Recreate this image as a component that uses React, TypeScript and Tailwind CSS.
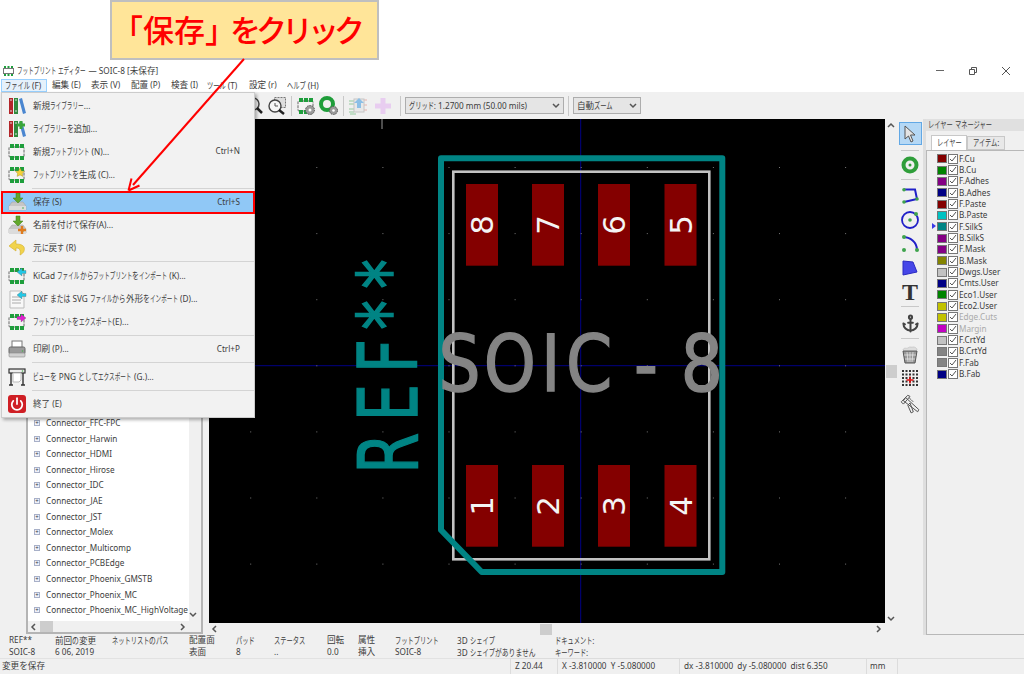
import React from 'react';
import { Anchor, Power } from 'lucide-react';

const GREEN = '#1e9e3c';

// The original UI font has condensed kana; no installed font does, so kana runs are squeezed
function Jp({ text, wide }: { text: string; wide?: boolean }) {
  const parts = text.split(/([\u30A0-\u30FF]+|[\u3040-\u309F]+|[\u4E00-\u9FFF]+)/);
  return (
    <>
      {parts.map((part, i) => {
        if (/^[\u30A0-\u30FF]+$/.test(part)) {
          return (
            <span key={i} className="inline-block whitespace-nowrap text-[9.2px]" style={{ width: part.length * (wide ? 6.2 : 5.6) }}>
              <span className={`inline-block origin-left ${wide ? 'scale-x-[0.68]' : 'scale-x-[0.61]'}`}>{part}</span>
            </span>
          );
        }
        if (/^[\u3040-\u309F]+$/.test(part)) {
          return (
            <span key={i} className="inline-block whitespace-nowrap text-[9.2px]" style={{ width: part.length * 6.8 }}>
              <span className="inline-block origin-left scale-x-[0.74]">{part}</span>
            </span>
          );
        }
        if (/^[\u4E00-\u9FFF]+$/.test(part)) {
          return <span key={i} className="whitespace-pre text-[8.6px]">{part}</span>;
        }
        return <span key={i} className="whitespace-pre">{part}</span>;
      })}
    </>
  );
}

function Fp({ children, gear }: { children?: React.ReactNode; gear?: boolean }) {
  return (
    <svg width="20" height="20" viewBox="0 0 20 20">
      <rect x="2" y="5" width="15" height="10" rx="1" fill="#f4f4f4" stroke="#666" strokeDasharray={gear ? undefined : '3 1'} />
      {[3, 8, 13].map((x) => (
        <g key={x}>
          <rect x={x} y="2" width="4" height="4" fill={GREEN} />
          <rect x={x} y="14" width="4" height="4" fill={GREEN} />
        </g>
      ))}
      {children}
    </svg>
  );
}

function Books({ plus }: { plus?: boolean }) {
  return (
    <svg width="20" height="20" viewBox="0 0 20 20">
      <rect x="2" y="2" width="4" height="16" fill="#b3262a" />
      <rect x="7" y="2" width="4" height="16" fill="#2f8a3c" />
      <path d="M12 3l3-1 4 15-3 1z" fill="#4a86d0" />
      <path d="M3 4h2M3 15h2M8 4h2M8 15h2" stroke="#ddd" />
      {plus && <path d="M14 2v8M10 6h8" stroke="#3aa53a" strokeWidth="3" />}
    </svg>
  );
}

function Drive({ extra }: { extra?: boolean }) {
  return (
    <svg width="20" height="20" viewBox="0 0 20 20">
      <path d="M5 10h11l3 4v4H2v-4z" fill="#c6c6c6" stroke="#a5a5a5" strokeWidth=".6" />
      <rect x="2" y="14" width="17" height="4" fill="#dcdcdc" />
      <path d="M9 1h4v5h3l-5 5-5-5h3z" fill="#62a72b" stroke="#3d7d17" strokeWidth=".5" />
      <circle cx="16" cy="16" r=".8" fill="#46a846" />
      {extra && <path d="M15 11v8M11 15h8" stroke="#e07b1e" strokeWidth="2.4" />}
    </svg>
  );
}

function Undo() {
  return (
    <svg width="20" height="20" viewBox="0 0 20 20">
      <path d="M9 2L2 8l7 5v-3c3 0 5 1 4 7 4-2 5-5 4-8-1-2-4-3-8-3z" fill="#f1d34c" stroke="#d2ae2c" strokeWidth=".6" />
    </svg>
  );
}

function ArrowOn({ color }: { color: string }) {
  return <path d="M10 6l5-4v2.500h4v3h-4V10z" fill={color} stroke="#555" strokeWidth=".3" />;
}

function DocImport() {
  return (
    <svg width="20" height="20" viewBox="0 0 20 20">
      <path d="M3 2h11l3 3v14H3z" fill="#f8f8f8" stroke="#bbb" />
      <path d="M5 8h9M5 11h9M5 14h9" stroke="#aaa" />
      <ArrowOn color="#22c7e6" />
    </svg>
  );
}

function Printer() {
  return (
    <svg width="20" height="20" viewBox="0 0 20 20">
      <rect x="5" y="2" width="10" height="7" fill="#fff" stroke="#777" />
      <rect x="2" y="8" width="16" height="7" rx="1.500" fill="#9a9a9a" stroke="#666" />
      <rect x="2" y="14" width="16" height="4" rx="1" fill="#d0d0d0" stroke="#888" strokeWidth=".6" />
      <circle cx="15.500" cy="12" r=".8" fill="#4caf50" />
    </svg>
  );
}

function Plotter() {
  return (
    <svg width="20" height="20" viewBox="0 0 20 20">
      <rect x="2" y="2" width="16" height="4" fill="#eee" stroke="#333" strokeWidth="1.200" />
      <path d="M6 6h8v7l-2 2H6z" fill="#fff" stroke="#bbb" />
      <path d="M4 6v12M16 6v12M2 18h4M14 18h4" stroke="#333" strokeWidth="1.400" />
      <circle cx="15.500" cy="4" r=".8" fill="#4caf50" />
    </svg>
  );
}

function Quit() {
  return (
    <span className="flex h-[18px] w-[18px] items-center justify-center rounded-[3px] bg-[#cf1f25]">
      <Power size={14} color="#fff" strokeWidth={3} />
    </span>
  );
}

type MenuRow = { label?: string; key?: string; icon?: React.ReactNode; active?: boolean };

const menuRows: MenuRow[] = [
  { label: '新規ライブラリー...', icon: <Books /> },
  { label: 'ライブラリーを追加...', icon: <Books plus /> },
  { label: '新規フットプリント (N)...', key: 'Ctrl+N', icon: <Fp /> },
  {
    label: 'フットプリントを生成 (C)...',
    icon: (
      <Fp>
        <path d="M13 3l1.500 3 3 .4-2.200 2 .6 3-2.900-1.500-2.900 1.500.6-3-2.200-2 3-.4z" fill="#f3d23a" stroke="#9a8420" strokeWidth=".4" />
      </Fp>
    ),
  },
  {},
  { label: '保存 (S)', key: 'Ctrl+S', icon: <Drive />, active: true },
  { label: '名前を付けて保存(A)...', icon: <Drive extra /> },
  { label: '元に戻す (R)', icon: <Undo /> },
  {},
  { label: 'KiCad ファイルからフットプリントをインポート (K)...', icon: <Fp><ArrowOn color="#22c7e6" /></Fp> },
  { label: 'DXF または SVG ファイルから外形をインポート (D)...', icon: <DocImport /> },
  { label: 'フットプリントをエクスポート(E)...', icon: <Fp><path d="M19 6l-5-4v2.500h-4v3h4V10z" fill="#e01fd0" stroke="#555" strokeWidth=".3" /></Fp> },
  {},
  { label: '印刷 (P)...', key: 'Ctrl+P', icon: <Printer /> },
  {},
  { label: 'ビューを PNG としてエクスポート (G.)...', icon: <Plotter /> },
  {},
  { label: '終了 (E)', icon: <Quit /> },
];

const topMenu = [
  { label: '編集 (E)', w: 'w-[39px]' },
  { label: '表示 (V)', w: 'w-[40px]' },
  { label: '配置 (P)', w: 'w-[40px]' },
  { label: '検査 (I)', w: 'w-[36px]' },
  { label: 'ツール (T)', w: 'w-[42px]' },
  { label: '設定 (r)', w: 'w-[38px]' },
  { label: 'ヘルプ (H)', w: 'w-[50px]' },
];

const libs = [
  'Connector_FFC-FPC',
  'Connector_Harwin',
  'Connector_HDMI',
  'Connector_Hirose',
  'Connector_IDC',
  'Connector_JAE',
  'Connector_JST',
  'Connector_Molex',
  'Connector_Multicomp',
  'Connector_PCBEdge',
  'Connector_Phoenix_GMSTB',
  'Connector_Phoenix_MC',
  'Connector_Phoenix_MC_HighVoltage',
];

const layers = [
  { name: 'F.Cu', bg: 'bg-[#840000]' },
  { name: 'B.Cu', bg: 'bg-[#008400]' },
  { name: 'F.Adhes', bg: 'bg-[#840084]' },
  { name: 'B.Adhes', bg: 'bg-[#000084]' },
  { name: 'F.Paste', bg: 'bg-[#840000]' },
  { name: 'B.Paste', bg: 'bg-[#00c2c2]' },
  { name: 'F.SilkS', bg: 'bg-[#008484]', current: true },
  { name: 'B.SilkS', bg: 'bg-[#840084]' },
  { name: 'F.Mask', bg: 'bg-[#840084]' },
  { name: 'B.Mask', bg: 'bg-[#848400]' },
  { name: 'Dwgs.User', bg: 'bg-[#c2c2c2]' },
  { name: 'Cmts.User', bg: 'bg-[#000084]' },
  { name: 'Eco1.User', bg: 'bg-[#008400]' },
  { name: 'Eco2.User', bg: 'bg-[#c2c200]' },
  { name: 'Edge.Cuts', bg: 'bg-[#c2c200]', dim: true },
  { name: 'Margin', bg: 'bg-[#c200c2]', dim: true },
  { name: 'F.CrtYd', bg: 'bg-[#c2c2c2]' },
  { name: 'B.CrtYd', bg: 'bg-[#848484]' },
  { name: 'F.Fab', bg: 'bg-[#848484]' },
  { name: 'B.Fab', bg: 'bg-[#000084]' },
];

const msgCols = [
  { a: 'REF**', b: 'SOIC-8', w: 'w-[46px]' },
  { a: '前回の変更', b: '6 06, 2019', w: 'w-[57px]' },
  { a: 'ネットリストのパス', b: '', w: 'w-[77px]' },
  { a: '配置面', b: '表面', w: 'w-[47px]' },
  { a: 'パッド', b: '8', w: 'w-[38px]' },
  { a: 'ステータス', b: '..', w: 'w-[53px]' },
  { a: '回転', b: '0.0', w: 'w-[31px]' },
  { a: '属性', b: '挿入', w: 'w-[37px]' },
  { a: 'フットプリント', b: 'SOIC-8', w: 'w-[62px]' },
  { a: '3D シェイプ', b: '3D シェイプがありません', w: 'w-[98px]' },
  { a: 'ドキュメント:', b: 'キーワード:', w: 'w-[60px]' },
];

const pads = [
  { x: 466, y: 184, n: '8' },
  { x: 532, y: 184, n: '7' },
  { x: 598, y: 184, n: '6' },
  { x: 664.5, y: 184, n: '5' },
  { x: 466, y: 465, n: '1' },
  { x: 532, y: 465, n: '2' },
  { x: 598, y: 465, n: '3' },
  { x: 664.5, y: 465, n: '4' },
];

function Chevron({ dir }: { dir: 'up' | 'down' | 'left' | 'right' }) {
  const d = { up: 'M1 5l3-3 3 3', down: 'M1 2l3 3 3-3', left: 'M5 1L2 4l3 3', right: 'M3 1l3 3-3 3' }[dir];
  return (
    <svg width="8" height="8" viewBox="0 0 8 8" className="shrink-0">
      <path d={d} fill="none" stroke="#555" strokeWidth="1.500" />
    </svg>
  );
}

function Sep() {
  return <div className="mx-[4px] h-[20px] w-px bg-[#c8c8c8]" />;
}

function ToolSep() {
  return <div className="my-[5px] h-px w-[18px] shrink-0 bg-[#c8c8c8]" />;
}

function Board() {
  const dots: [number, number][] = [];
  for (let x = 250.2; x < 885; x += 66.1) {
    for (let y = 167; y < 623; y += 66.1) dots.push([x, y]);
  }
  return (
    <svg viewBox="209 119 676 504" className="h-full w-full">
      <path d="M209 365.700H885M580.700 119V623" stroke="#000084" strokeWidth="1" />
      <path d="M382 119v10" stroke="#999" strokeWidth="1" />
      {dots.map(([x, y]) => (
        <rect key={`${x}-${y}`} x={x} y={y} width="1" height="1" fill="#777" />
      ))}
      <rect x="453.300" y="171.700" width="256" height="387.600" fill="none" stroke="#c2c2c2" strokeWidth="2.600" />
      {pads.map((p) => (
        <g key={p.n}>
          <rect x={p.x} y={p.y} width="32" height="81.700" fill="#840000" />
          <text
            transform={`translate(${p.x + 27} ${p.y + 41}) rotate(-90)`}
            textAnchor="middle"
            fontFamily="'DejaVu Sans', sans-serif"
            fontSize="31"
            fill="#f4f4f4"
          >
            {p.n}
          </text>
        </g>
      ))}
      <path d="M441 158.300H722.300V572H481.700L441 530z" fill="none" stroke="#008484" strokeWidth="6" strokeLinejoin="round" />
      <text
        transform="scale(0.85 1)"
        x="516 569 636.500 666 746 801"
        y="391"
        fontFamily="'DejaVu Sans', sans-serif"
        fontSize="78"
        fill="#848484"
        stroke="#848484"
        strokeWidth="1.500"
      >
        SOIC-8
      </text>
      <text
        transform="translate(417 468) rotate(-90) scale(0.72 1)"
        x="-8 65 132 192 249"
        fontFamily="'DejaVu Sans', sans-serif"
        fontSize="82"
        fill="#008484"
        stroke="#008484"
        strokeWidth="1.500"
      >
        REF**
      </text>
    </svg>
  );
}

export default function App() {
  return (
    <div className="relative flex h-[674px] w-[1024px] flex-col overflow-hidden bg-white font-['Noto_Sans','Noto_Sans_CJK_JP',sans-serif] text-[8.2px] leading-none text-[#3c3c3c]">
      {/* Blank strip above the window */}
      <div className="h-[62px] shrink-0" />

      {/* Title bar */}
      <div className="flex h-[17px] shrink-0 items-center">
        <svg width="11" height="10" viewBox="0 0 11 10" className="ml-[3px] mr-[3px]">
          <path d="M1 0h2v2H1zM4.500 0h2v2h-2zM8 0h2v2H8zM1 8h2v2H1zM4.500 8h2v2h-2zM8 8h2v2H8z" fill={GREEN} />
          <rect x=".5" y="2.500" width="10" height="5" fill="none" stroke="#777" />
        </svg>
        <span className="whitespace-nowrap">
          <Jp text="フットプリント エディター — SOIC-8 [未保存]" />
        </span>
        <div className="ml-auto flex items-center">
          <div className="mr-[25px] h-px w-[8px] bg-[#666]" />
          <svg width="8" height="8" viewBox="0 0 8 8" className="mr-[25px]">
            <path d="M.5 2.500h5v5h-5zM2.500 2.500V.5h5v5h-2" fill="none" stroke="#555" />
          </svg>
          <svg width="8" height="8" viewBox="0 0 8 8" className="mr-[14px]">
            <path d="M0 0l8 8M8 0L0 8" stroke="#555" />
          </svg>
        </div>
      </div>

      {/* Menu bar */}
      <div className="flex h-[13px] shrink-0 items-center pl-px">
        <div className="flex h-full w-[46px] items-center whitespace-nowrap border border-[#99d1ff] bg-[#e5f1fb] pl-[3px]">
          <span><Jp text="ファイル (F)" wide /></span>
        </div>
        {topMenu.map((m) => (
          <div key={m.label} className={`${m.w} pl-[5px] whitespace-nowrap`}>
            <Jp text={m.label} wide />
          </div>
        ))}
      </div>

      {/* Main toolbar */}
      <div className="flex h-[27px] shrink-0 items-center bg-[#f0f0f0] pl-[248px]">
        <svg width="16" height="18" viewBox="0 0 16 18" className="mr-[4px]">
          <circle cx="5" cy="7" r="6" fill="none" stroke="#444" strokeWidth="1.500" />
          <path d="M9 11l5 5" stroke="#222" strokeWidth="2.500" />
        </svg>
        <svg width="19" height="18" viewBox="0 0 19 18">
          <rect x="6.500" y=".5" width="11" height="10" fill="#ddd" stroke="#777" strokeDasharray="2 1" />
          <circle cx="7" cy="9" r="6" fill="#f6f6f6" stroke="#444" strokeWidth="1.400" />
          <path d="M11 13l5 4" stroke="#222" strokeWidth="2.500" />
          <path d="M7 6v3h3" fill="none" stroke="#555" />
        </svg>
        <Sep />
        <Fp>
          <circle cx="14" cy="14" r="4.500" fill="#9a9a9a" stroke="#555" strokeDasharray="1.500 1" />
          <circle cx="14" cy="14" r="1.500" fill="#fff" />
        </Fp>
        <svg width="20" height="20" viewBox="0 0 20 20" className="ml-[3px]">
          <circle cx="8" cy="8" r="6" fill="none" stroke="#1f9d3a" strokeWidth="4" />
          <circle cx="14.500" cy="14.500" r="4" fill="#9a9a9a" stroke="#555" strokeDasharray="1.500 1" />
          <circle cx="14.500" cy="14.500" r="1.300" fill="#fff" />
        </svg>
        <Sep />
        <svg width="20" height="20" viewBox="0 0 20 20" className="opacity-60">
          <path d="M1 5h6M1 8h5M1 13h6M1 16h5M2 18h6" stroke="#58b368" />
          <path d="M16 4h3M16 9h3M16 14h3" stroke="#e08a80" />
          <rect x="6" y="3" width="10" height="13" fill="#e4e4e4" stroke="#aaa" />
          <path d="M11 2l5 5h-3v5H9V7H6z" fill="#4b9fe0" />
        </svg>
        <svg width="20" height="20" viewBox="0 0 20 20" className="ml-[5px] mr-[3px]">
          <path d="M7.500 2h5v5.500H18v5h-5.500V18h-5v-5.500H2v-5h5.500z" fill="#e8cdf0" />
        </svg>
        <Sep />
        <div className="flex h-[17px] w-[159px] items-center justify-between whitespace-nowrap border border-[#adadad] bg-[#e5e5e5] pl-[3px] pr-[3px]">
          <span><Jp text="グリッド: 1.2700 mm (50.00 mils)" wide /></span>
          <Chevron dir="down" />
        </div>
        <Sep />
        <div className="flex h-[17px] w-[68px] items-center justify-between whitespace-nowrap border border-[#adadad] bg-[#e5e5e5] pl-[3px] pr-[3px]">
          <span><Jp text="自動ズーム" wide /></span>
          <Chevron dir="down" />
        </div>
      </div>

      {/* Work area */}
      <div className="flex h-[516px] shrink-0 bg-[#f0f0f0]">
        {/* Library tree */}
        <div className="flex w-[209px] shrink-0 flex-col pl-[26px] pr-[6px]">
          <div className="flex h-[515px] flex-col border-2 border-[#b4b4b4] bg-white">
            <div className="flex min-h-0 flex-1">
              <div className="flex flex-1 flex-col justify-end pb-[3px]">
                {libs.map((name) => (
                  <div key={name} className="flex h-[15.6px] shrink-0 items-center whitespace-nowrap">
                    <span className="ml-[6px] mr-[6px] flex h-[6px] w-[6px] shrink-0 items-center justify-center border border-[#a8b0c8] bg-[#eef0f8] text-[6px] text-[#334]">
                      +
                    </span>
                    {name}
                  </div>
                ))}
              </div>
              <div className="flex w-[12px] flex-col justify-end bg-[#f0f0f0] pb-[2px]">
                <Chevron dir="down" />
              </div>
            </div>
            <div className="flex h-[11px] shrink-0 items-center bg-[#f0f0f0] pl-[2px] pr-[15px]">
              <Chevron dir="left" />
              <div className="ml-[2px] h-full w-[13px] bg-[#cdcdcd]" />
              <div className="flex-1" />
              <Chevron dir="right" />
            </div>
          </div>
        </div>

        {/* Canvas with its horizontal scroll bar */}
        <div className="flex w-[676px] shrink-0 flex-col">
          <div className="h-[504px] bg-black">
            <Board />
          </div>
          <div className="flex h-[12px] items-center pl-[2px] pr-[3px]">
            <Chevron dir="left" />
            <div className="ml-[321px] h-[11px] w-[12px] bg-[#cdcdcd]" />
            <div className="flex-1" />
            <Chevron dir="right" />
          </div>
        </div>

        {/* Vertical scroll bar */}
        <div className="relative flex w-[12px] shrink-0 flex-col items-center pt-[3px]">
          <Chevron dir="up" />
          <div className="mt-[235px] h-[13px] w-[11px] bg-[#cdcdcd]" />
          <div className="flex-1" />
          <div className="pb-[12px]">
            <Chevron dir="down" />
          </div>
        </div>

        {/* Right tool strip */}
        <div className="flex w-[26px] shrink-0 flex-col items-center pt-[3px]">
          <div className="flex h-[23px] w-[23px] shrink-0 items-center justify-center border border-[#62a8e5] bg-[#b5d8f5]">
            <svg width="16" height="18" viewBox="0 0 16 18">
              <path d="M3 1l10 9H8.500l2.500 6-2 1-2.500-6L3 14z" fill="#e4e4e4" stroke="#555" />
            </svg>
          </div>
          <ToolSep />
          <svg width="18" height="18" viewBox="0 0 18 18" className="shrink-0">
            <circle cx="9" cy="9" r="6.500" fill="none" stroke="#2f9e3a" strokeWidth="4" />
            <circle cx="9" cy="9" r="1.500" fill="#2f9e3a" />
          </svg>
          <ToolSep />
          <svg width="18" height="20" viewBox="0 0 18 20" className="mt-[3px] shrink-0">
            <path d="M3 1.500H14L16 11L3 14" fill="none" stroke="#2020c8" strokeWidth="2" />
            <circle cx="3" cy="1.800" r="1.800" fill="#3fa34d" />
            <circle cx="3" cy="14" r="1.800" fill="#3fa34d" />
            <circle cx="16" cy="11" r="1.800" fill="#3fa34d" />
          </svg>
          <svg width="20" height="20" viewBox="0 0 20 20" className="mt-[2px] shrink-0">
            <circle cx="10" cy="10" r="8" fill="none" stroke="#2020c8" strokeWidth="1.800" />
            <circle cx="10" cy="10" r="1.800" fill="#3fa34d" />
            <circle cx="16" cy="4" r="2" fill="#3fa34d" />
          </svg>
          <svg width="20" height="20" viewBox="0 0 20 20" className="mt-[4px] shrink-0">
            <path d="M3 3c7 0 14 5 14 13" fill="none" stroke="#2020c8" strokeWidth="2" />
            <circle cx="4" cy="3" r="2" fill="#3fa34d" />
            <circle cx="4" cy="16" r="2" fill="#3fa34d" />
            <circle cx="17" cy="16" r="2" fill="#3fa34d" />
          </svg>
          <svg width="16" height="16" viewBox="0 0 16 16" className="mt-[6px] shrink-0">
            <path d="M1 1L11 2L15 12L1 15z" fill="#4646e8" stroke="#2a2ac0" />
          </svg>
          <span className="mt-[7px] h-[18px] shrink-0 font-['Liberation_Serif',serif] text-[24px] font-bold leading-[18px] text-[#333]">T</span>
          <ToolSep />
          <Anchor size={19} color="#444" strokeWidth={2.5} className="mt-[2px] shrink-0" />
          <ToolSep />
          <svg width="16" height="18" viewBox="0 0 16 18" className="mt-[2px] shrink-0">
            <path d="M1 4c1-3 3-1 5-2 2-2 4 0 5-1 2 0 4 1 4 3" fill="#ddd" stroke="#ccc" />
            <path d="M1 5h14l-2 12H3z" fill="#999" stroke="#555" />
            <path d="M5 6l1 10M8 6v10M11 6l-1 10M2 9h12M3 13h10" stroke="#eee" strokeWidth=".7" />
          </svg>
          <svg width="16" height="16" viewBox="0 0 16 16" className="mt-[6px] shrink-0">
            {[0, 3.500, 7, 10.500, 14].map((x) =>
              [0, 3.500, 7, 10.500, 14].map((y) => <rect key={`${x}-${y}`} x={x} y={y} width="2" height="2" fill="#333" />),
            )}
            <path d="M8 6.500v7M4.500 10h7" stroke="#e01010" strokeWidth="1.400" />
          </svg>
          <svg width="22" height="22" viewBox="0 0 20 20" className="mt-[6px] shrink-0">
            <path d="M2 9l6-6 2 1-6 7zM6 5l12 11-1 2L4 8zM8 12l2-2 3 8-2 1z" fill="#f0f0f0" stroke="#555" strokeWidth=".9" />
            <path d="M9 5l2 2M11 7l2 2" stroke="#555" strokeWidth=".8" />
          </svg>
        </div>

        {/* Sash */}
        <div className="w-[3px] shrink-0 bg-[#dedede]" />

        {/* Layer manager */}
        <div className="flex min-w-0 flex-1 flex-col">
          <div className="flex h-[12px] shrink-0 items-center whitespace-nowrap bg-[#e0e0e0] pl-[2px]">
            <span><Jp text="レイヤー マネージャー" wide /></span>
          </div>
          <div className="flex h-[19px] shrink-0 items-end pl-[5px]">
            <div className="flex h-[15px] w-[36px] items-center justify-center whitespace-nowrap border border-b-0 border-[#c8c8c8] bg-white">
              <span><Jp text="レイヤー" wide /></span>
            </div>
            <div className="flex h-[14px] w-[38px] items-center justify-center whitespace-nowrap border border-[#c8c8c8] bg-[#e8e8e8]">
              <span><Jp text="アイテム:" wide /></span>
            </div>
          </div>
          <div className="relative flex-1 border-b border-l border-t border-[#b8b8b8] pl-[10px] pt-[2px]">
            {layers.map((l) => (
              <div key={l.name} className={`relative flex h-[11.350px] items-center whitespace-nowrap ${l.dim ? 'text-[#aaa]' : ''}`}>
                {l.current && (
                  <div className="absolute left-[-5px] top-[2px] h-0 w-0 border-y-[3.500px] border-l-[4px] border-y-transparent border-l-[#3a3ae8]" />
                )}
                <div className={`h-[9px] w-[10px] border border-[#777] ${l.bg}`} />
                <svg width="10" height="10" viewBox="0 0 10 10" className="ml-px mr-[1px] bg-white outline outline-1 -outline-offset-1 outline-[#777]">
                  <path d="M2 5l2 2 4-5" fill="none" stroke="#555" strokeWidth="1" />
                </svg>
                <span>{l.name}</span>
              </div>
            ))}
          </div>
        </div>
      </div>

      {/* Message panel */}
      <div className="flex h-[23px] shrink-0 bg-[#f0f0f0] pl-[9px]">
        {msgCols.map((c) => (
          <div key={c.a} className={`${c.w} flex shrink-0 flex-col gap-[1.500px] whitespace-nowrap pt-[1px]`}>
            <span className="h-[10px]"><Jp text={c.a} wide /></span>
            <span className="h-[10px]"><Jp text={c.b} wide /></span>
          </div>
        ))}
      </div>

      {/* Status bar */}
      <div className="flex h-[16px] shrink-0 items-center bg-[#f0f0f0]">
        <div className="flex h-full w-[510px] items-center border-t border-[#e2e2e2] pl-[2px] text-[8.6px]">変更を保存</div>
        <div className="flex h-full w-[47px] items-center border-l border-t border-[#dcdcdc] pl-[4px]">Z 20.44</div>
        <div className="flex h-full w-[122px] items-center whitespace-pre border-l border-t border-[#dcdcdc] pl-[4px]">X -3.810000  Y -5.080000</div>
        <div className="flex h-full w-[187px] items-center whitespace-pre border-l border-t border-[#dcdcdc] pl-[4px]">dx -3.810000  dy -5.080000  dist 6.350</div>
        <div className="flex h-full w-[31px] items-center border-l border-t border-[#dcdcdc] pl-[3px]">mm</div>
        <div className="h-full flex-1 border-l border-t border-[#dcdcdc]" />
      </div>

      {/* File menu, open */}
      <div className="absolute left-px top-[92px] w-[254px] border border-[#cccccc] bg-[#f2f2f2] py-[1px] shadow-[2px_2px_3px_rgba(0,0,0,0.3)]">
        {menuRows.map((row, i) =>
          row.label ? (
            <div key={i} className={`relative flex h-[23px] items-center ${row.active ? 'bg-[#90c8f6]' : ''}`}>
              <span className="flex w-[30px] shrink-0 items-center justify-center">{row.icon}</span>
              <span className="ml-px whitespace-nowrap"><Jp text={row.label} /></span>
              {row.key && <span className="ml-auto mr-[14px]">{row.key}</span>}
              {row.active && <div className="absolute -inset-x-[1px] inset-y-0 border-[2px] border-[#ff0000]" />}
            </div>
          ) : (
            <div key={i} className="flex h-[4.500px] items-center pl-[30px]">
              <div className="h-px w-full bg-[#d4d4d4]" />
            </div>
          ),
        )}
      </div>

      {/* Annotation */}
      <div className="absolute left-[110px] top-0 flex h-[60px] w-[269px] items-center whitespace-nowrap border-[2px] border-[#bfbfbf] bg-[#ffe599] pb-[4px] font-['Noto_Sans_CJK_JP',sans-serif] text-[31px] font-medium text-[#ff0000]">
        <span className="mr-[-6px]">「保存」</span>
        <span className="tracking-[-5px]">をクリック</span>
      </div>
      <svg className="pointer-events-none absolute left-0 top-0" width="300" height="200" viewBox="0 0 300 200">
        <path d="M244 59L133 185" stroke="#ff0000" strokeWidth="2" fill="none" />
        <path d="M128.500 190.500l3-12M128.500 190.500l11-5" stroke="#ff0000" strokeWidth="2" fill="none" />
      </svg>
    </div>
  );
}
